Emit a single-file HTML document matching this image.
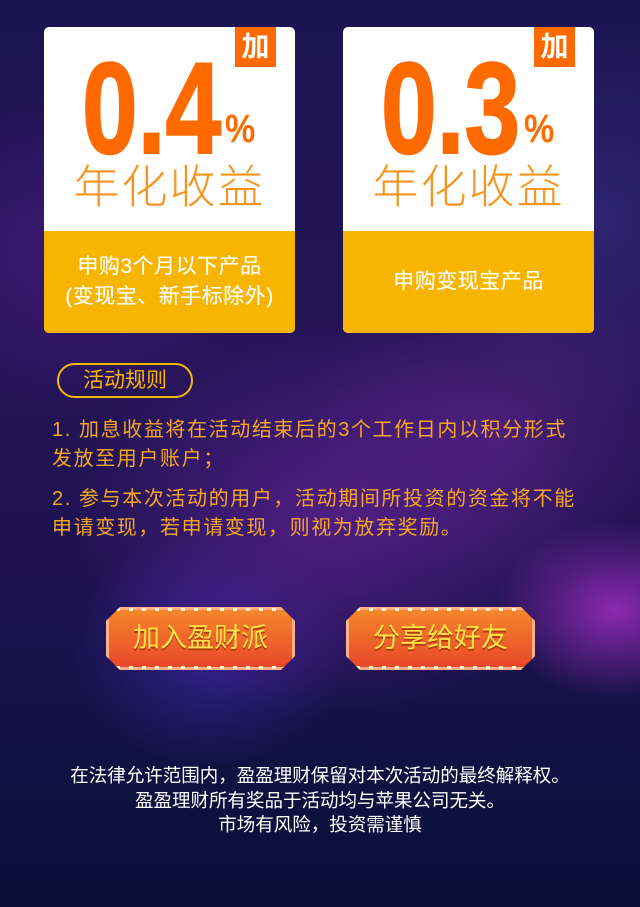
<!DOCTYPE html>
<html><head><meta charset="utf-8"><style>
*{margin:0;padding:0;box-sizing:border-box}
body{width:640px;height:907px;overflow:hidden;position:relative;font-family:"Liberation Sans","Noto Sans CJK SC",sans-serif;
background:
radial-gradient(ellipse 120px 90px at 615px 610px,rgba(230,60,255,.55),transparent),
radial-gradient(ellipse 260px 200px at 330px 520px,rgba(120,40,170,.55),transparent),
radial-gradient(ellipse 200px 160px at 500px 430px,rgba(110,40,150,.5),transparent),
radial-gradient(ellipse 200px 160px at 80px 250px,rgba(90,30,150,.5),transparent),
radial-gradient(ellipse 140px 120px at 210px 650px,rgba(80,50,220,.45),transparent),
radial-gradient(ellipse 200px 200px at 600px 220px,rgba(60,50,140,.5),transparent),
linear-gradient(180deg,#1c1452 0%,#241456 40%,#1d1250 65%,#0f1240 85%,#0a0f38 100%);}
.card{position:absolute;top:27px;width:251px;height:306px;border-radius:5px;overflow:hidden;background:#fff}
.card .bot{position:absolute;left:0;right:0;top:204px;bottom:0;background:#f7b500;color:#fff;font-size:21px;text-align:center;display:flex;align-items:center;justify-content:center;line-height:30px;letter-spacing:.5px;text-shadow:0 0 .5px #fff}
.badge{position:absolute;top:0;right:19px;width:41px;height:40px;background:#ff6a00;color:#fff;font-size:28px;font-weight:bold;text-align:center;line-height:40px}
.num{position:absolute;top:16px;left:38px;color:#ff6a00;font-weight:bold;font-size:130px;line-height:130px;transform:scaleX(.77);transform-origin:left;white-space:nowrap;-webkit-text-stroke:2px #ff6a00}
.pct{position:absolute;left:181px;top:82px;color:#ff6a00;font-weight:bold;font-size:40px;line-height:40px;transform:scaleX(.85);transform-origin:left}
.yr{position:absolute;top:124px;left:0;right:0;text-align:center;color:#f7941d;font-size:46px;font-weight:300;letter-spacing:2px}
.pill{position:absolute;left:57px;top:363px;width:136px;height:35px;border:2px solid #f5b800;border-radius:18px;color:#f7b500;font-size:21px;text-align:center;line-height:31px}
.rules{position:absolute;left:52px;top:416px;width:540px;color:#f5a623;font-size:20px;line-height:29px;letter-spacing:1.6px}
.btn{position:absolute;top:607px;width:189px;height:63px;background:linear-gradient(#f58a2a,#e8442a);clip-path:polygon(14px 0,175px 0,189px 14px,189px 49px,175px 63px,14px 63px,0 49px,0 14px);color:#ffe24a;font-size:27px;text-align:center;line-height:63px;text-shadow:0 2px 0 #b33a10;box-shadow:inset 0 0 0 3px #ffb08a}
.btn:before,.btn:after{content:"";position:absolute;left:10px;right:10px;height:3px;background:repeating-linear-gradient(90deg,#fff6d0 0 4px,transparent 4px 13px)}
.btn:before{top:1px}.btn:after{bottom:1px}
.foot{position:absolute;top:764px;left:0;right:0;text-align:center;color:#fff;font-size:18.5px;line-height:24.5px}
</style></head><body>
<div class="card" style="left:44px"><div class="badge">加</div><div class="num">0.4</div><div class="pct">%</div><div class="yr">年化收益</div><div class="bot">申购3个月以下产品<br>(变现宝、新手标除外)</div></div>
<div class="card" style="left:343px"><div class="badge">加</div><div class="num">0.3</div><div class="pct">%</div><div class="yr">年化收益</div><div class="bot">申购变现宝产品</div></div>
<div class="pill">活动规则</div>
<div class="rules">1. 加息收益将在活动结束后的3个工作日内以积分形式<br>发放至用户账户；<div style="height:11px"></div>2. 参与本次活动的用户，活动期间所投资的资金将不能申请变现，若申请变现，则视为放弃奖励。</div>
<div class="btn" style="left:106px">加入盈财派</div>
<div class="btn" style="left:346px">分享给好友</div>
<div class="foot">在法律允许范围内，盈盈理财保留对本次活动的最终解释权。<br>盈盈理财所有奖品于活动均与苹果公司无关。<br>市场有风险，投资需谨慎</div>
</body></html>
